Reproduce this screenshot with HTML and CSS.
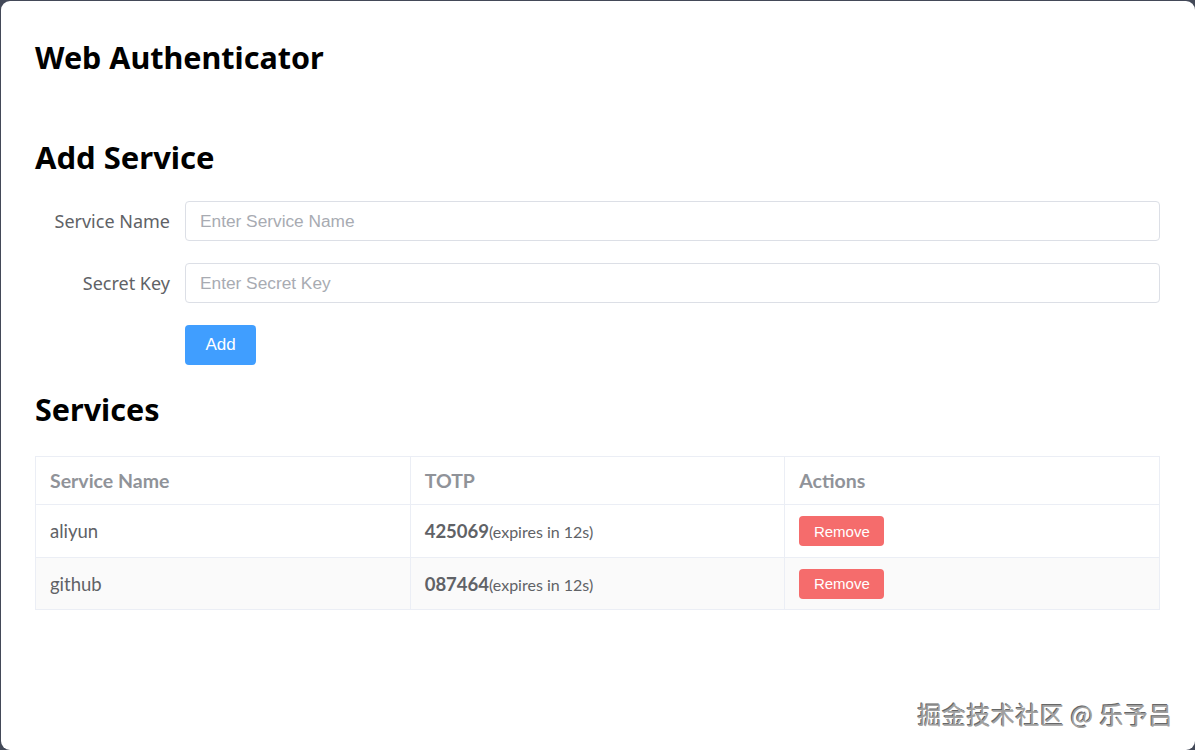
FILE: index.html
```html
<!DOCTYPE html>
<html lang="en">
<head>
    <meta charset="UTF-8">
    <meta name="viewport" content="width=device-width, initial-scale=1.0">
    <title>Web Authenticator</title>
    <link rel="stylesheet" href="styles.css">
</head>
<body>
    <div class="window">
        <h1 class="title">Web Authenticator</h1>

        <h2 class="section-title">Add Service</h2>
        <form class="add-form" onsubmit="return false">
            <div class="form-item">
                <label class="form-label" for="name">Service Name</label>
                <input class="form-input" id="name" type="text" placeholder="Enter Service Name">
            </div>
            <div class="form-item">
                <label class="form-label" for="secret">Secret Key</label>
                <input class="form-input" id="secret" type="text" placeholder="Enter Secret Key">
            </div>
            <div class="form-item form-actions">
                <span class="form-label"></span>
                <button class="btn btn-primary" type="submit">Add</button>
            </div>
        </form>

        <h2 class="section-title services-title">Services</h2>
        <table class="services">
            <thead>
                <tr><th>Service Name</th><th>TOTP</th><th>Actions</th></tr>
            </thead>
            <tbody>
                <tr>
                    <td>aliyun</td>
                    <td><b class="code">425069</b><span class="expires">(expires in 12s)</span></td>
                    <td><button class="btn btn-danger">Remove</button></td>
                </tr>
                <tr class="striped">
                    <td>github</td>
                    <td><b class="code">087464</b><span class="expires">(expires in 12s)</span></td>
                    <td><button class="btn btn-danger">Remove</button></td>
                </tr>
            </tbody>
        </table>

        <div class="watermark">掘金技术社区 @ 乐予吕</div>
    </div>
</body>
</html>
```

FILE: styles.css
```css
* { box-sizing: border-box; margin: 0; padding: 0; }
html, body { height: 100%; }
body {
    background: #434958;
    font-family: "Noto Sans", "Noto Sans CJK SC", sans-serif;
    overflow: hidden;
}
.window {
    position: relative;
    height: 749px;
    margin: 1px 0 0 1px;
    background: #fff;
    border-radius: 9px;
    padding: 34px 35px 0 34px;
}
.title {
    font-size: 30.5px;
    font-weight: 700;
    line-height: 44px;
    color: #000;
}
.section-title {
    font-size: 31px;
    font-weight: 700;
    line-height: 44px;
    color: #000;
    margin-top: 56px;
    margin-bottom: 22px;
}
.services-title { margin-top: 4px; margin-bottom: 25px; font-size: 30.5px; }

.form-item {
    display: flex;
    align-items: center;
    margin-bottom: 22px;
}
.form-actions { margin-top: 1px; }
.form-label {
    width: 150px;
    flex: none;
    padding-right: 15px;
    text-align: right;
    font-size: 18px;
    color: #606266;
}
.form-input {
    flex: 1;
    height: 40px;
    border: 1px solid #dcdfe6;
    border-radius: 4px;
    padding: 0 14px;
    font-family: "Liberation Sans", Arial, sans-serif;
    font-size: 17.3px;
    color: #606266;
    outline: none;
}
.form-input::placeholder { color: #a8abb2; }

.btn {
    border: none;
    border-radius: 4px;
    color: #fff;
    font-family: "Liberation Sans", Arial, sans-serif;
    cursor: pointer;
}
.btn-primary {
    background: #409eff;
    width: 71px;
    height: 40px;
    font-size: 17px;
}
.btn-danger {
    background: #f56c6c;
    width: 85px;
    height: 30px;
    font-size: 15px;
}

.services {
    width: 100%;
    table-layout: fixed;
    border-collapse: collapse;
    border: 1px solid #ebeef5;
    font-family: "Lato", "Noto Sans CJK SC", sans-serif;
    color: #606266;
}
.services th, .services td {
    border: 1px solid #ebeef5;
    padding: 0 14px;
    text-align: left;
}
.services th {
    height: 48px;
    font-size: 19.5px;
    font-weight: 700;
    color: #909399;
}
.services td {
    height: 52px;
    font-size: 18.5px;
}
.services tbody tr:first-child td { height: 53px; }
.services .striped td { background: #fafafa; }
.code { font-weight: 700; font-size: 18.5px; }
.expires { font-size: 16px; }

.watermark {
    position: absolute;
    right: 22px;
    bottom: 20px;
    font-family: "Noto Sans CJK SC", sans-serif;
    font-size: 24px;
    line-height: 32px;
    color: #a0a0a0;
    text-shadow: 1px 1px 0 #fff, -1px -1px 0 #666;
    letter-spacing: 0.5px;
}
```
